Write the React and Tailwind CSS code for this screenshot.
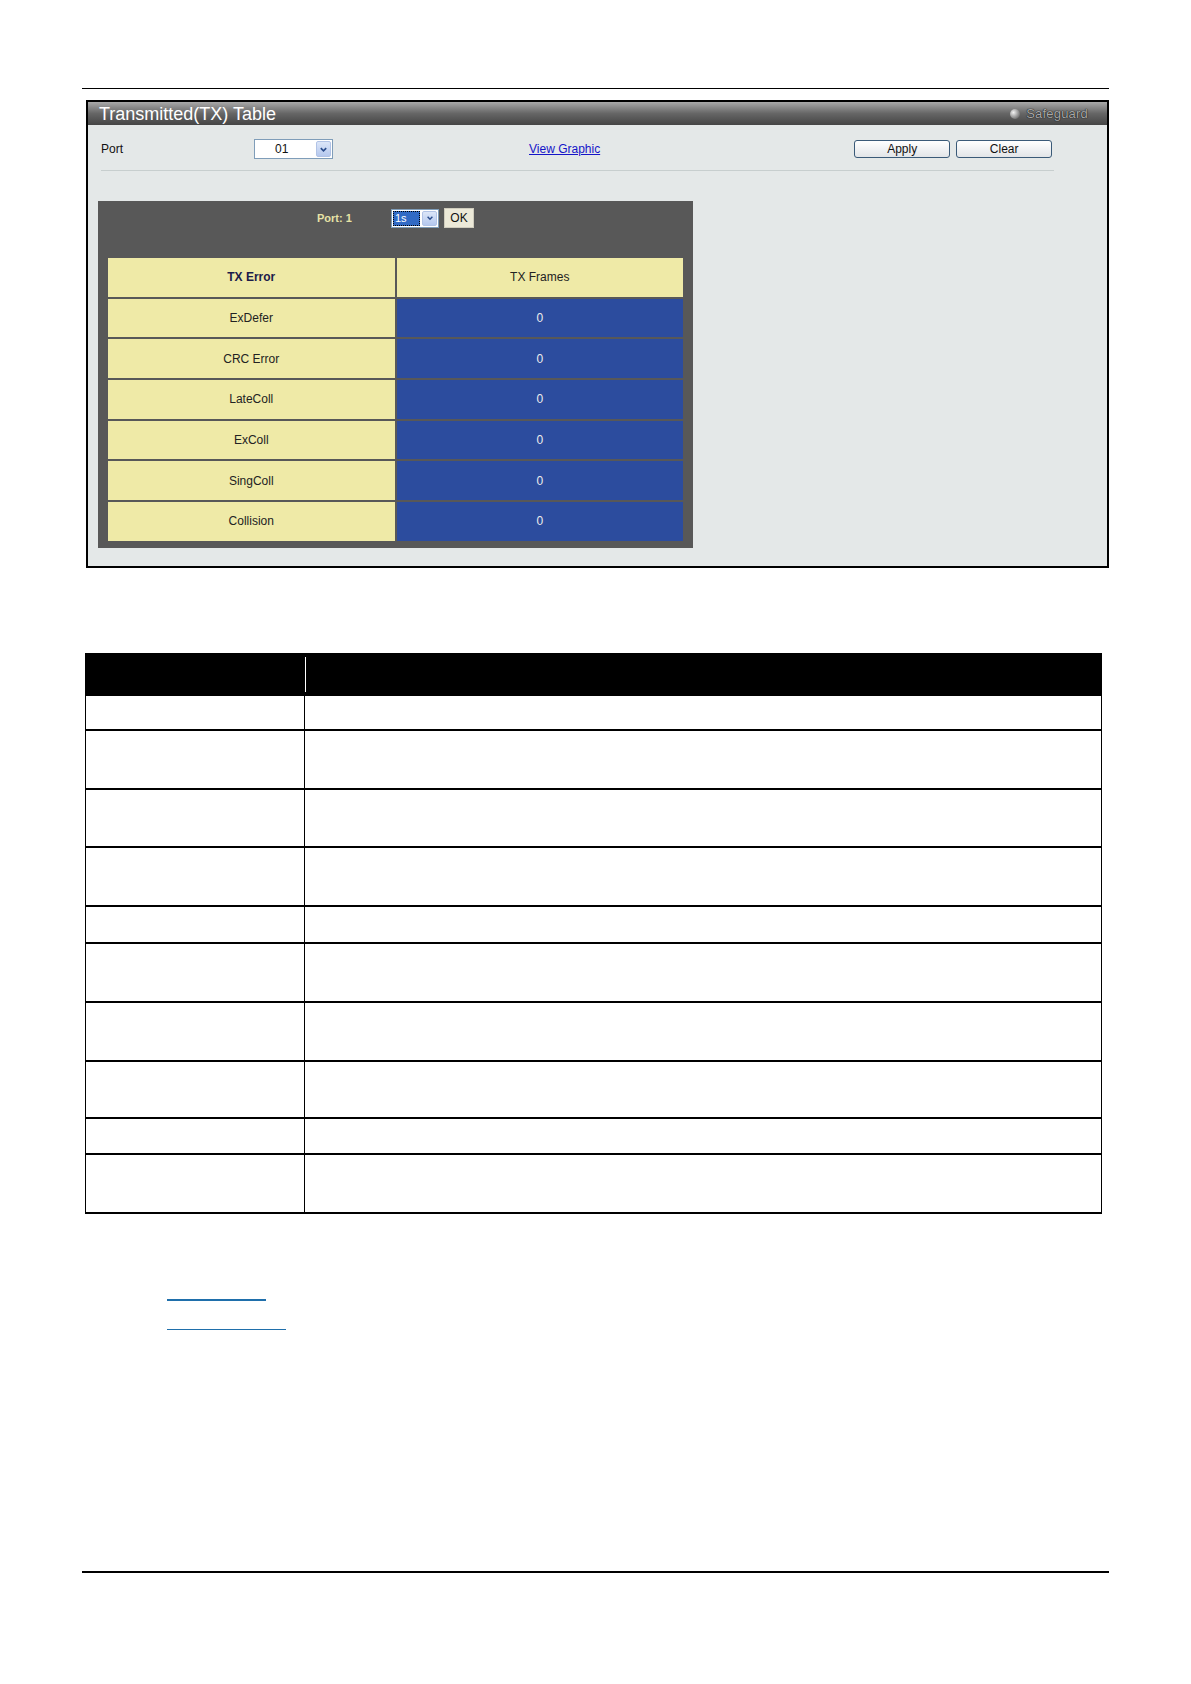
import React from "react";

const rows = ["ExDefer", "CRC Error", "LateColl", "ExColl", "SingColl", "Collision"];
const lowerRows = [35, 59, 58, 59, 37, 59, 59, 57, 36, 59];

function Chevron({ className }) {
  return (
    <svg viewBox="0 0 10 10" className={className}>
      <path d="M2 3.5 L5 6.5 L8 3.5" fill="none" stroke="#2a4c8c" strokeWidth="1.8" />
    </svg>
  );
}

export default function App() {
  return (
    <div className="w-[1191px] h-[1684px] bg-white relative overflow-hidden font-['Liberation_Sans',Arial,sans-serif]">
      <div className="pt-[88px]">
        <div className="ml-[82px] w-[1027px] h-px bg-black" />

        {/* Panel */}
        <div className="mt-[11px] ml-[86px] w-[1023px] h-[468px] border-2 border-black bg-[#E4E8E8] flex flex-col">
          <div className="h-[23px] flex items-center justify-between bg-gradient-to-b from-[#a9a9a9] via-[#666666] to-[#454545] pl-[11px] pr-[19px]">
            <span className="text-white text-[18px] leading-none">Transmitted(TX) Table</span>
            <div className="flex items-center gap-[6px]">
              <span className="w-[10px] h-[10px] rounded-full bg-[radial-gradient(circle_at_35%_35%,#f2f2f2,#8a8a8a_60%,#444)]" />
              <span className="text-[13px] text-[#a8a8a8] leading-none tracking-[0.2px] [text-shadow:0_0_1px_#111,0_0_1px_#111]">Safeguard</span>
            </div>
          </div>

          <div className="pt-[14px] flex items-center h-[34px]">
            <div className="w-[166px] pl-[13px] text-[12px] text-[#111]">Port</div>
            <div className="w-[79px] h-[20px] border border-[#7f9db9] bg-white flex items-center justify-between pl-[20px] pr-[1px]">
              <span className="text-[12px] text-[#111]">01</span>
              <span className="w-[15px] h-[16px] bg-gradient-to-b from-[#dce6f8] to-[#b5c8ee] border border-[#b1c3e6] rounded-[2px] flex items-center justify-center">
                <Chevron className="w-[9px] h-[9px]" />
              </span>
            </div>
            <a className="ml-[196px] text-[12px] text-[#1515c8] underline">View Graphic</a>
            <div className="ml-[254px] flex gap-[6px]">
              <button className="w-[96px] h-[18px] rounded-[3px] border border-[#3a5a78] bg-gradient-to-b from-white to-[#e2e5e8] text-[12px] text-[#111] leading-none">Apply</button>
              <button className="w-[96px] h-[18px] rounded-[3px] border border-[#3a5a78] bg-gradient-to-b from-white to-[#e2e5e8] text-[12px] text-[#111] leading-none">Clear</button>
            </div>
          </div>

          <div className="mt-[11px] ml-[13px] w-[953px] h-px bg-[#c7cece]" />

          {/* Dark box */}
          <div className="mt-[30px] ml-[10px] w-[595px] h-[347px] bg-[#585858] flex flex-col">
            <div className="pt-[7px] h-[27px] flex items-center">
              <div className="w-[293px] pl-[219px] text-[11px] font-bold text-[#e6e2a6]">Port: 1</div>
              <div className="w-[48px] h-[19px] border border-[#7f9db9] bg-white flex items-center justify-between p-[1px]">
                <span className="h-full w-[27px] bg-[#316ac5] border border-dotted border-black text-white text-[11px] leading-none flex items-center pl-[1px]">1s</span>
                <span className="w-[15px] h-full bg-gradient-to-b from-[#dce6f8] to-[#b5c8ee] border border-[#b1c3e6] rounded-[2px] flex items-center justify-center">
                  <Chevron className="w-[8px] h-[8px]" />
                </span>
              </div>
              <button className="ml-[5px] w-[30px] h-[20px] bg-[#ece9d8] border border-[#cfccbd] text-[12px] text-[#111] leading-none">OK</button>
            </div>

            <div className="mt-[30px] ml-[10px] w-[575px] grid grid-cols-2 gap-[2px] text-[12px]">
              <div className="h-[38.7px] bg-[#efeaa7] flex items-center justify-center font-bold text-[#1c1c4a]">TX Error</div>
              <div className="h-[38.7px] bg-[#efeaa7] flex items-center justify-center text-[#222]">TX Frames</div>
              {rows.map((r) => (
                <React.Fragment key={r}>
                  <div className="h-[38.7px] bg-[#efeaa7] flex items-center justify-center text-[#222]">{r}</div>
                  <div className="h-[38.7px] bg-[#2c4c9e] flex items-center justify-center text-[#ececec]">0</div>
                </React.Fragment>
              ))}
            </div>
          </div>
        </div>

        {/* Lower table */}
        <div className="mt-[85px] ml-[85px] w-[1017px] border-l border-r border-black">
          <div className="h-[43px] bg-black flex items-center">
            <div className="w-[219px]" />
            <div className="w-px h-[35px] bg-white" />
          </div>
          {lowerRows.map((h, i) => (
            <div key={i} style={{ height: h }} className="flex border-b-2 border-black">
              <div className="w-[219px] border-r border-black" />
              <div className="flex-1" />
            </div>
          ))}
        </div>

        {/* Links */}
        <div className="mt-[85px] ml-[167px] w-[99px] h-[1.5px] bg-[#1f6fab]" />
        <div className="mt-[28px] ml-[167px] w-[119px] h-[1.5px] bg-[#1f6fab]" />

        <div className="mt-[241px] ml-[82px] w-[1027px] h-[2px] bg-black" />
      </div>
    </div>
  );
}
